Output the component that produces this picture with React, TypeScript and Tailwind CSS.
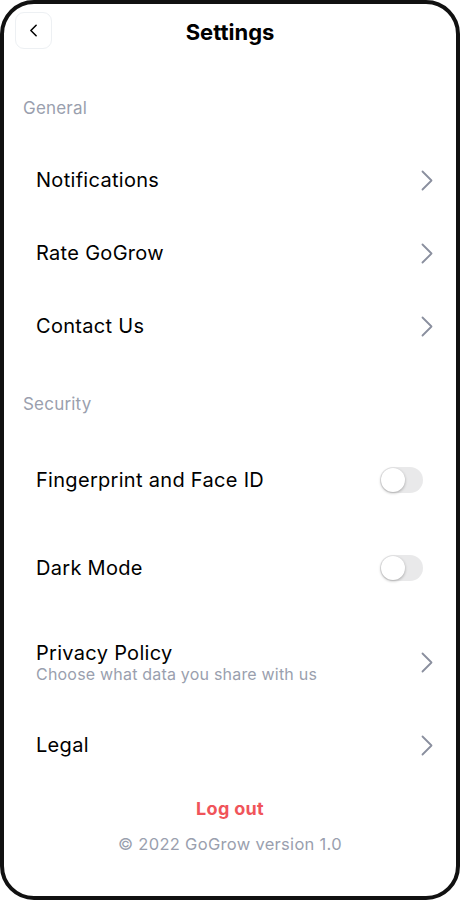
import { ChevronLeft } from 'lucide-react'

const font = { fontFamily: 'Inter, "Noto Sans", sans-serif' }

function Chevron() {
  return (
    <svg width="12" height="21" viewBox="0 0 12 21" fill="none" className="text-[#8a8f9e]">
      <polyline points="1.5,1.5 10.5,10.5 1.5,19.5" stroke="currentColor" strokeWidth="1.8" strokeLinecap="round" strokeLinejoin="round" />
    </svg>
  )
}

function LinkRow({ title, sub }: { title: string; sub?: string }) {
  return (
    <div className="flex items-center justify-between pl-[32px] pr-[23px]">
      <div className="flex flex-col">
        <span className="text-[20px] leading-[24px] tracking-[0.3px] text-black">{title}</span>
        {sub && <span className="text-[16px] leading-[19px] tracking-[0.2px] text-[#9a9fae]">{sub}</span>}
      </div>
      <Chevron />
    </div>
  )
}

function ToggleRow({ title }: { title: string }) {
  return (
    <div className="flex items-center justify-between pl-[32px] pr-[33px]">
      <span className="text-[20px] leading-[24px] tracking-[0.3px] text-black">{title}</span>
      <div className="w-[43px] h-[26px] rounded-full bg-[#e9e9ea] p-[1px]">
        <div className="w-[24px] h-[24px] rounded-full bg-white shadow-[0_1px_3px_rgba(0,0,0,0.3)]" />
      </div>
    </div>
  )
}

export default function App() {
  return (
    <div className="w-[460px] h-[900px] bg-white" style={font}>
      <div className="h-full border-4 border-[#111] rounded-[34px] bg-white flex flex-col">
        <div className="relative flex items-center justify-center pt-[7px] h-[49px]">
          <button className="absolute left-[11px] top-[8px] w-[37px] h-[37px] rounded-[9px] border border-[#edf0f3] flex items-center justify-center">
            <ChevronLeft size={21} strokeWidth={1.8} className="text-black" />
          </button>
          <h1 className="text-[22px] font-bold text-black">Settings</h1>
        </div>

        <div className="pl-[19px] mt-[44px] text-[17px] leading-[22px] tracking-[0.2px] text-[#9a9fae]">General</div>
        <div className="flex flex-col gap-[49px] mt-[49px]">
          <LinkRow title="Notifications" />
          <LinkRow title="Rate GoGrow" />
          <LinkRow title="Contact Us" />
        </div>

        <div className="pl-[19px] mt-[55px] text-[17px] leading-[22px] tracking-[0.2px] text-[#9a9fae]">Security</div>
        <div className="flex flex-col mt-[52px]">
          <ToggleRow title="Fingerprint and Face ID" />
          <div className="h-[62px]" />
          <ToggleRow title="Dark Mode" />
          <div className="h-[60px]" />
          <LinkRow title="Privacy Policy" sub="Choose what data you share with us" />
          <div className="h-[49px]" />
          <LinkRow title="Legal" />
        </div>

        <div className="mt-[38px] text-center text-[18px] font-bold tracking-[0.3px] text-[#f0545a]">Log out</div>
        <div className="mt-[10px] text-center text-[16.5px] tracking-[0.3px] text-[#9a9fae]">© 2022 GoGrow version 1.0</div>
      </div>
    </div>
  )
}
